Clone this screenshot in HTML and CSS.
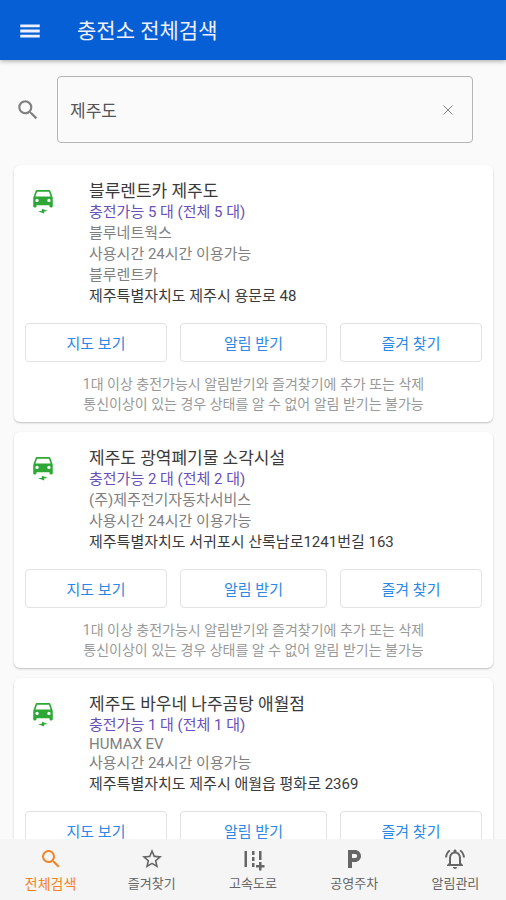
FILE: index.html
```html
<!DOCTYPE html>
<html lang="ko">
<head>
<meta charset="utf-8">
<meta name="viewport" content="width=device-width, initial-scale=1">
<title>충전소 전체검색</title>
<link rel="stylesheet" href="styles.css">
</head>
<body>
<svg class="sprite" aria-hidden="true">
  <symbol id="search" viewBox="0 0 24 24"><path d="M15.5 14h-.79l-.28-.27A6.47 6.47 0 0 0 16 9.5 6.5 6.5 0 1 0 9.5 16c1.61 0 3.09-.59 4.23-1.57l.27.28v.79l5 4.99L20.49 19l-4.99-5zm-6 0C7.01 14 5 11.99 5 9.5S7.01 5 9.5 5 14 7.01 14 9.5 11.99 14 9.5 14z"/></symbol>
  <symbol id="ev-car" viewBox="0 0 24 24"><path d="M18.92 2.01C18.72 1.42 18.16 1 17.5 1h-11c-.66 0-1.21.42-1.42 1.01L3 8v8c0 .55.45 1 1 1h1c.55 0 1-.45 1-1v-1h12v1c0 .55.45 1 1 1h1c.55 0 1-.45 1-1V8l-2.08-5.99zM6.5 12c-.83 0-1.5-.67-1.5-1.5S5.67 9 6.5 9 8 9.67 8 10.5 7.33 12 6.5 12zm11 0c-.83 0-1.5-.67-1.5-1.5S16.670 9 17.500 9 19 9.670 19 10.500 18.330 12 17.500 12zM5 7l1.500-4.500h11L19 7H5zM7.500 20.500l3.500-.5v-1.800l5.500 2-3.500.5v1.800z"/></symbol>
</svg>
<div class="app">
  <header class="topbar">
    <button class="icon-button" type="button" aria-label="메뉴">
      <svg class="icon-large" viewBox="0 0 24 24"><path d="M3 18h18v-2.600H3zM3 13.300h18v-2.600H3zM3 6v2.600h18V6z"/></svg>
    </button>
    <h1 class="topbar-title">충전소 전체검색</h1>
  </header>
  <main class="content">
    <form class="search" role="search">
      <label class="search-label" for="query" aria-label="검색"><svg class="icon-large"><use href="#search"/></svg></label>
      <div class="search-box">
        <input class="search-input" id="query" type="text" value="제주도">
        <button class="icon-button" type="reset" aria-label="지우기">
          <svg class="icon-clear" viewBox="0 0 10 10"><path d="M.5.5l9 9M9.500.5l-9 9"/></svg>
        </button>
      </div>
    </form>

    <section class="stations">
      <article class="card">
        <div class="station">
          <svg class="station-icon"><use href="#ev-car"/></svg>
          <div class="station-info">
            <h2 class="station-name">블루렌트카 제주도</h2>
            <p class="available">충전가능 5 대 (전체 5 대)</p>
            <p>블루네트웍스</p>
            <p>사용시간 24시간 이용가능</p>
            <p>블루렌트카</p>
            <p class="address">제주특별자치도 제주시 용문로 48</p>
          </div>
        </div>
        <div class="actions">
          <button class="action" type="button">지도 보기</button>
          <button class="action" type="button">알림 받기</button>
          <button class="action" type="button">즐겨 찾기</button>
        </div>
        <p class="note">1대 이상 충전가능시 알림받기와 즐겨찾기에 추가 또는 삭제<br>통신이상이 있는 경우 상태를 알 수 없어 알림 받기는 불가능</p>
      </article>

      <article class="card">
        <div class="station">
          <svg class="station-icon"><use href="#ev-car"/></svg>
          <div class="station-info">
            <h2 class="station-name">제주도 광역폐기물 소각시설</h2>
            <p class="available">충전가능 2 대 (전체 2 대)</p>
            <p>(주)제주전기자동차서비스</p>
            <p>사용시간 24시간 이용가능</p>
            <p class="address">제주특별자치도 서귀포시 산록남로1241번길 163</p>
          </div>
        </div>
        <div class="actions">
          <button class="action" type="button">지도 보기</button>
          <button class="action" type="button">알림 받기</button>
          <button class="action" type="button">즐겨 찾기</button>
        </div>
        <p class="note">1대 이상 충전가능시 알림받기와 즐겨찾기에 추가 또는 삭제<br>통신이상이 있는 경우 상태를 알 수 없어 알림 받기는 불가능</p>
      </article>

      <article class="card">
        <div class="station">
          <svg class="station-icon"><use href="#ev-car"/></svg>
          <div class="station-info">
            <h2 class="station-name">제주도 바우네 나주곰탕 애월점</h2>
            <p class="available">충전가능 1 대 (전체 1 대)</p>
            <p class="latin">HUMAX EV</p>
            <p>사용시간 24시간 이용가능</p>
            <p class="address">제주특별자치도 제주시 애월읍 평화로 2369</p>
          </div>
        </div>
        <div class="actions">
          <button class="action" type="button">지도 보기</button>
          <button class="action" type="button">알림 받기</button>
          <button class="action" type="button">즐겨 찾기</button>
        </div>
      </article>
    </section>
  </main>

  <nav class="tabs">
    <a class="tab tab-active" href="#all" aria-current="page">
      <svg class="icon"><use href="#search"/></svg>
      <span>전체검색</span>
    </a>
    <a class="tab" href="#favorites">
      <svg class="icon" viewBox="0 0 24 24"><path d="M22 9.240l-7.190-.62L12 2 9.190 8.630 2 9.240l5.460 4.730L5.820 21 12 17.270 18.180 21l-1.630-7.030L22 9.240zM12 15.400l-3.760 2.270 1-4.280-3.320-2.880 4.380-.38L12 6.100l1.710 4.040 4.380.38-3.320 2.880 1 4.280L12 15.400z"/></svg>
      <span>즐겨찾기</span>
    </a>
    <a class="tab" href="#highway">
      <svg class="icon" viewBox="0 0 24 24"><path d="M20.500 18v-3H18v3h-3v2.500h3v3h2.500v-3h3V18zM18 4h2.500v9H18zM3.500 4H6v16H3.500zM11 4h2.500v4H11zM11 10h2.500v4H11zM11 16h2.500v4H11z"/></svg>
      <span>고속도로</span>
    </a>
    <a class="tab" href="#parking">
      <svg class="icon" viewBox="0 0 24 24"><path d="M13 3H6v18h4v-6h3c3.310 0 6-2.690 6-6s-2.690-6-6-6zm.2 8H10V7h3.200c1.100 0 2 .9 2 2s-.9 2-2 2z"/></svg>
      <span>공영주차</span>
    </a>
    <a class="tab" href="#alerts">
      <svg class="icon" viewBox="0 0 24 24"><path d="M12 22c1.100 0 2-.9 2-2h-4c0 1.100.9 2 2 2zm6-6v-5c0-3.070-1.630-5.640-4.500-6.320V4c0-.83-.67-1.500-1.500-1.500s-1.500.67-1.500 1.500v.68C7.640 5.360 6 7.920 6 11v5l-2 2v1h16v-1l-2-2zm-2 1H8v-6c0-2.480 1.510-4.500 4-4.500s4 2.020 4 4.500v6zM7.580 4.080L6.150 2.650C3.750 4.480 2.170 7.300 2.030 10.500h2a8.450 8.450 0 0 1 3.550-6.420zm12.390 6.420h2c-.15-3.200-1.730-6.020-4.120-7.850l-1.420 1.430a8.500 8.500 0 0 1 3.540 6.420z"/></svg>
      <span>알림관리</span>
    </a>
  </nav>
</div>
</body>
</html>
```
FILE: styles.css
```css
* {
  box-sizing: border-box;
}

body,
h1,
h2,
p {
  margin: 0;
}

body {
  background: #fafafa;
  color: #808080;
  font-family: Roboto, "Noto Sans CJK KR", sans-serif;
  font-size: 15px;
}

button,
input {
  font: inherit;
}

svg {
  display: block;
  flex: none;
  fill: currentColor;
}

.sprite {
  display: none;
}

.app {
  display: flex;
  flex-direction: column;
  height: 100vh;
}

.icon {
  width: 24px;
  height: 24px;
}

.icon-large,
.station-icon {
  width: 26px;
  height: 26px;
}

.icon-clear {
  width: 10px;
  height: 10px;
  fill: none;
  stroke: currentColor;
}

.icon-button {
  padding: 0;
  border: 0;
  background: none;
  color: inherit;
}

.topbar {
  display: flex;
  flex: none;
  align-items: center;
  gap: 34px;
  height: 60px;
  padding: 2px 17px 0;
  background: #075fd5;
  box-shadow: 0 1px 5px rgba(0, 0, 0, 0.35);
  color: #eef0ff;
  z-index: 1;
}

.topbar-title {
  font-size: 21px;
  font-weight: 400;
  line-height: 30px;
}

.content {
  flex: 1;
  min-height: 0;
  overflow-y: auto;
  scrollbar-width: none;
}

.search {
  display: flex;
  align-items: center;
  gap: 16px;
  padding: 16px 33px 22px 15px;
}

.search-box {
  display: flex;
  flex: 1;
  align-items: center;
  height: 67px;
  padding: 0 19px 0 12px;
  border: 1px solid #b4b4b4;
  border-radius: 4px;
}

.search-input {
  flex: 1;
  min-width: 0;
  padding: 0;
  border: 0;
  outline: 0;
  background: none;
  color: #555;
  font-size: 17px;
}

.stations {
  display: flex;
  flex-direction: column;
  gap: 10px;
  padding: 0 13px 10px 14px;
}

.card {
  padding: 15px 11px 8px;
  border-radius: 6px;
  background: #fff;
  box-shadow: 0 1px 2px rgba(0, 0, 0, 0.24);
}

.station {
  display: flex;
  gap: 33px;
  padding-left: 5px;
}

.station-icon {
  margin-top: 9px;
  color: #2da836;
}

.station-info {
  line-height: 21px;
}

.station-name {
  color: #3a3a3a;
  font-size: 17px;
  font-weight: 400;
  line-height: 22px;
}

.available {
  color: #6750b8;
}

.latin {
  line-height: 17px;
}

.address {
  color: #3a3a3a;
}

.actions {
  display: grid;
  grid-template-columns: 142fr 147fr 142fr;
  gap: 13px;
  margin-top: 16px;
}

.action {
  height: 39px;
  padding: 0;
  border: 1px solid #e2e2e2;
  border-radius: 4px;
  background: #fff;
  color: #2b88e6;
}

.note {
  margin-top: 12px;
  color: #999;
  font-size: 14px;
  line-height: 20px;
  text-align: center;
}

.tabs {
  display: grid;
  flex: none;
  grid-template-columns: repeat(5, 1fr);
  height: 61px;
  background: #f5f5f5;
}

.tab {
  display: flex;
  flex-direction: column;
  align-items: center;
  gap: 3px;
  padding-top: 8px;
  color: #666;
  font-size: 13px;
  line-height: 20px;
  text-decoration: none;
}

.tab-active {
  color: #f58220;
  font-size: 14px;
}
```
